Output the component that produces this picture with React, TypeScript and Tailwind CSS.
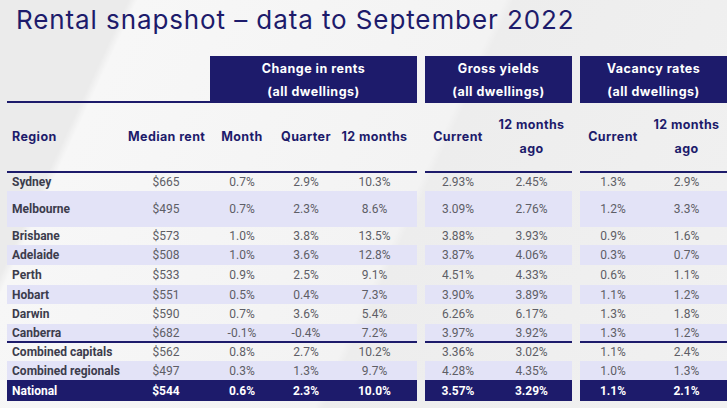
import React from "react";

type Row = {
  name: string;
  rent: string[];
  gy: string[];
  vr: string[];
  h: string;
  kind: "plain" | "shade" | "total";
  top?: boolean;
};

const rows: Row[] = [
  { name: "Sydney", rent: ["$665", "0.7%", "2.9%", "10.3%"], gy: ["2.93%", "2.45%"], vr: ["1.3%", "2.9%"], h: "h-[20px]", kind: "plain", top: true },
  { name: "Melbourne", rent: ["$495", "0.7%", "2.3%", "8.6%"], gy: ["3.09%", "2.76%"], vr: ["1.2%", "3.3%"], h: "h-[36px]", kind: "shade" },
  { name: "Brisbane", rent: ["$573", "1.0%", "3.8%", "13.5%"], gy: ["3.88%", "3.93%"], vr: ["0.9%", "1.6%"], h: "h-[18px]", kind: "plain" },
  { name: "Adelaide", rent: ["$508", "1.0%", "3.6%", "12.8%"], gy: ["3.87%", "4.06%"], vr: ["0.3%", "0.7%"], h: "h-[20px]", kind: "shade" },
  { name: "Perth", rent: ["$533", "0.9%", "2.5%", "9.1%"], gy: ["4.51%", "4.33%"], vr: ["0.6%", "1.1%"], h: "h-[20px]", kind: "plain" },
  { name: "Hobart", rent: ["$551", "0.5%", "0.4%", "7.3%"], gy: ["3.90%", "3.89%"], vr: ["1.1%", "1.2%"], h: "h-[19px]", kind: "shade" },
  { name: "Darwin", rent: ["$590", "0.7%", "3.6%", "5.4%"], gy: ["6.26%", "6.17%"], vr: ["1.3%", "1.8%"], h: "h-[20px]", kind: "plain" },
  { name: "Canberra", rent: ["$682", "-0.1%", "-0.4%", "7.2%"], gy: ["3.97%", "3.92%"], vr: ["1.3%", "1.2%"], h: "h-[17px]", kind: "shade" },
  { name: "Combined capitals", rent: ["$562", "0.8%", "2.7%", "10.2%"], gy: ["3.36%", "3.02%"], vr: ["1.1%", "2.4%"], h: "h-[20px]", kind: "plain", top: true },
  { name: "Combined regionals", rent: ["$497", "0.3%", "1.3%", "9.7%"], gy: ["4.28%", "4.35%"], vr: ["1.0%", "1.3%"], h: "h-[19px]", kind: "shade" },
  { name: "National", rent: ["$544", "0.6%", "2.3%", "10.0%"], gy: ["3.57%", "3.29%"], vr: ["1.1%", "2.1%"], h: "h-[21px]", kind: "total" },
];

const G1 = "grid grid-cols-[121px_76px_76px_52px_85px] w-[410px]";
const G2 = "grid grid-cols-[66px_81px] w-[147px]";

const HeadBox = ({ title, width }: { title: string; width: string }) => (
  <div className={`${width} h-[47px] bg-[#1d1b6b] text-white flex flex-col items-center justify-center text-[12.5px] font-bold leading-[23px] tracking-[0.5px]`}>
    <div>{title}</div>
    <div>(all dwellings)</div>
  </div>
);

function DataRow({ row }: { row: Row }) {
  const bg =
    row.kind === "shade" ? "bg-[#e3e3f7]" : row.kind === "total" ? "bg-[#1d1b6b]" : "";
  const border = row.top ? "border-t-2 border-[#1d1b6b]" : "";
  const nameCls = row.kind === "total" ? "text-white font-bold" : "text-[#3c3c4c] font-bold";
  const valCls = row.kind === "total" ? "text-white font-bold" : "text-[#5e5e66]";
  return (
    <div className={`flex gap-2 ${row.h}`}>
      <div className={`${G1} ${bg} ${border} items-center`}>
        <div className={`pl-[5px] ${nameCls}`}>{row.name}</div>
        {row.rent.map((v, i) => (
          <div key={i} className={`text-center ${valCls}`}>{v}</div>
        ))}
      </div>
      <div className={`${G2} ${bg} ${border} items-center`}>
        {row.gy.map((v, i) => (
          <div key={i} className={`text-center ${valCls}`}>{v}</div>
        ))}
      </div>
      <div className={`${G2} ${bg} ${border} items-center`}>
        {row.vr.map((v, i) => (
          <div key={i} className={`text-center ${valCls}`}>{v}</div>
        ))}
      </div>
    </div>
  );
}

export default function App() {
  return (
    <div className="w-[727px] h-[408px] overflow-hidden bg-[linear-gradient(115deg,#ebebeb_0%,#ebebeb_14%,#f7f7f7_15%,#f3f3f3_55%,#ededed_56%,#f1f1f1_100%)]">
      <div className="h-[56px] pl-[16px] pt-[2px] text-[26px] leading-[36px] text-[#1d1b6b] font-['Inter',sans-serif] tracking-[0.9px]">
        Rental snapshot – data to September 2022
      </div>

      <div className="pl-[7px] font-['Inter',sans-serif]">
        <div className="flex">
          <div className="w-[203px] border-b-2 border-[#1d1b6b]" />
          <HeadBox title="Change in rents" width="w-[207px]" />
          <div className="w-2" />
          <HeadBox title="Gross yields" width="w-[147px]" />
          <div className="w-2" />
          <HeadBox title="Vacancy rates" width="w-[147px]" />
        </div>

        <div className="flex gap-2 h-[68px] text-[12.5px] font-bold text-[#1d1b6b] leading-[24px] tracking-[0.4px] whitespace-nowrap">
          <div className={`${G1} items-center`}>
            <div className="pl-[5px]">Region</div>
            <div className="text-center">Median rent</div>
            <div className="text-center">Month</div>
            <div className="text-center">Quarter</div>
            <div className="text-center">12 months</div>
          </div>
          <div className={`${G2} items-center`}>
            <div className="text-center">Current</div>
            <div className="text-center">12 months<br />ago</div>
          </div>
          <div className={`${G2} items-center`}>
            <div className="text-center">Current</div>
            <div className="text-center">12 months<br />ago</div>
          </div>
        </div>
      </div>

      <div className="pl-[7px] font-['Roboto',sans-serif] text-[12px] leading-none">
        {rows.map((r) => (
          <DataRow key={r.name} row={r} />
        ))}
      </div>
    </div>
  );
}
